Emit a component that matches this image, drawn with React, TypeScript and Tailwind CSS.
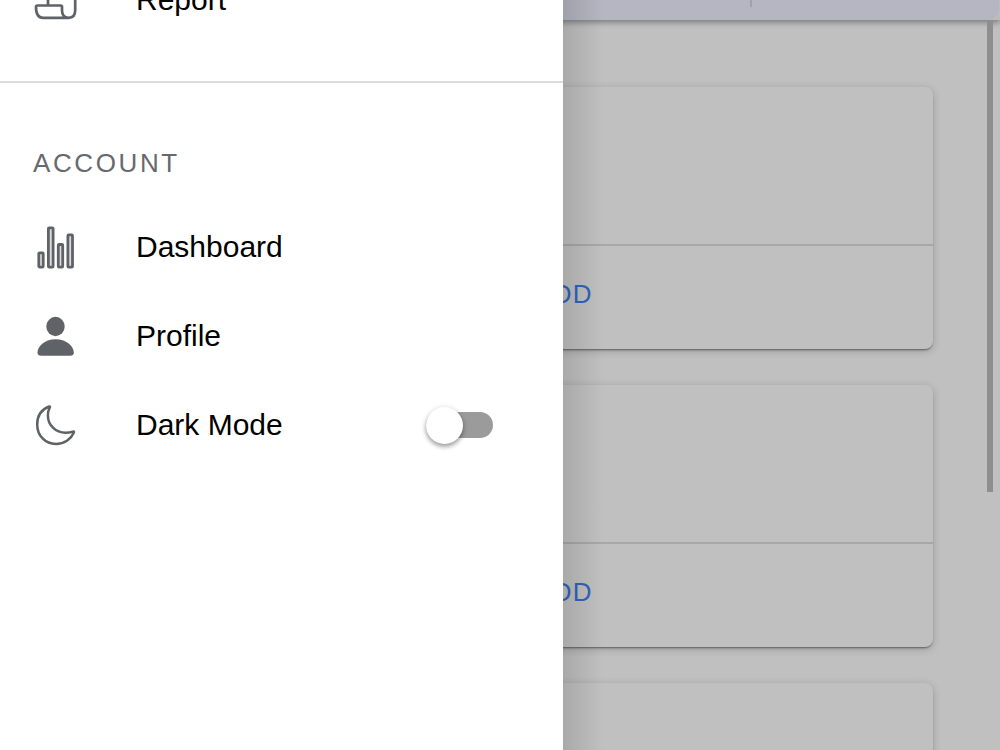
import { useState, type ReactNode } from "react";

function ReportIcon() {
  return (
    <svg viewBox="0 0 44 44" className="size-11" fill="none" stroke="currentColor" strokeWidth="2.7" strokeLinejoin="round" strokeLinecap="round" aria-hidden="true">
      <path d="M15 27.500V7a4.500 4.500 0 0 1 4.500-4.500h18.500a4.500 4.500 0 0 1 4.200 4.500V32q0 7.800-6.500 7.800T29 32.500v-3.500q0-1.500-1.500-1.500H4.500q-1.500 0-1.500 1.500 0 10.800 7 10.800h26" />
      <path d="M21 11h15M21 18h15" />
    </svg>
  );
}

function ChartIcon() {
  return (
    <svg viewBox="0 0 44 44" className="size-11" fill="#dcdce0" stroke="currentColor" strokeWidth="2.800" aria-hidden="true">
      <rect x="5.800" y="27.800" width="4.400" height="14.300" rx="0.800" />
      <rect x="15.400" y="2.800" width="4.700" height="39.300" rx="0.800" />
      <rect x="25.300" y="19.500" width="4.400" height="22.600" rx="0.800" />
      <rect x="34.900" y="9.900" width="4.600" height="32.200" rx="0.800" />
    </svg>
  );
}

function PersonIcon() {
  return (
    <svg viewBox="0 0 44 44" className="size-11" fill="currentColor" aria-hidden="true">
      <ellipse cx="22.500" cy="12.500" rx="9.200" ry="9.700" />
      <path d="M8.200 41.800Q4.500 41.800 4.500 38.500C4.500 32.500 11.200 25.200 22.600 25.200S40.800 32.500 40.800 38.500Q40.800 41.800 37.100 41.800Z" />
    </svg>
  );
}

function MoonIcon() {
  return (
    <svg viewBox="0 0 44 44" className="size-11" fill="none" stroke="currentColor" strokeWidth="2.500" strokeLinejoin="round" aria-hidden="true">
      <path d="M16.200 3.500C8.500 6.300 4.200 12.800 4.200 21.500C4.200 32.800 12.300 41 23 41C31.300 41 38 36.300 40.900 29.600C41.300 28.600 40.700 28.300 39.800 28.600C37.800 29.300 35.500 29.800 32.500 29.800C22.500 29.800 14.900 22 14.900 12.500C14.900 9.500 15.700 6.500 16.700 4.700C17.200 3.700 17 3.200 16.200 3.500Z" />
    </svg>
  );
}

function MenuRow({ icon, children }: { icon: ReactNode; children: ReactNode }) {
  return (
    <li className="flex h-[89px] shrink-0 items-center pl-[33px] pr-[70px]">
      <span className="mr-[59px] flex text-[#5f6368]">{icon}</span>
      {children}
    </li>
  );
}

function Card() {
  return (
    <article className="rounded-lg bg-[#c0c0c0] shadow-[0_2px_2px_-1px_rgba(0,0,0,0.45),0_2px_8px_rgba(0,0,0,0.2)]">
      <div className="h-[157px]" />
      <div className="flex justify-center border-t-2 border-[#a8a8a8] pt-[30px] pb-9">
        <button type="button" className="text-[26px] leading-[37px] tracking-wider text-[#3064bb]">
          ADD
        </button>
      </div>
    </article>
  );
}

export default function App() {
  const [dark, setDark] = useState(false);

  return (
    <div className="relative h-screen overflow-hidden bg-[#c0c0c0] font-['Liberation_Sans',Arial,sans-serif]">
      <header className="relative h-5 bg-[#bcbcbf] shadow-[0_2px_6px_rgba(0,0,0,0.4)]">
        <div className="mr-px flex h-5 justify-end rounded-br-xl bg-[#b5b6c1] pr-[247px]">
          <span className="h-[7px] w-0.5 bg-[#a0a1ab]" />
        </div>
      </header>

      <main className="flex flex-col gap-9 pt-[67px] pr-[67px] pl-[194px]">
        <Card />
        <Card />
        <Card />
      </main>

      <div className="absolute top-5 right-[7px] h-[472px] w-1.5 bg-[#8e8e8e]" />

      <nav
        aria-label="Main menu"
        className="absolute inset-y-0 left-0 w-[563px] bg-white text-[30px] leading-10 text-black after:absolute after:inset-y-0 after:left-full after:w-10 after:bg-linear-to-r after:from-black/12 after:to-transparent"
      >
        <ul className="flex h-11 flex-col justify-end overflow-hidden">
          <MenuRow icon={<ReportIcon />}>
            <a href="#report">Report</a>
          </MenuRow>
        </ul>
        <hr className="mt-[37px] border-t-2 border-[#dcdcdc]" />
        <h2 className="mt-[60px] pl-[33px] text-[26px] tracking-widest text-[#66696d]">ACCOUNT</h2>
        <ul className="mt-[19px]">
          <MenuRow icon={<ChartIcon />}>
            <a href="#dashboard">Dashboard</a>
          </MenuRow>
          <MenuRow icon={<PersonIcon />}>
            <a href="#profile">Profile</a>
          </MenuRow>
          <MenuRow icon={<MoonIcon />}>
            <label htmlFor="dark-mode" className="grow">
              Dark Mode
            </label>
            <input
              id="dark-mode"
              type="checkbox"
              role="switch"
              checked={dark}
              onChange={(e) => setDark(e.target.checked)}
              className="relative h-[26px] w-[67px] appearance-none rounded-full bg-[#9b9b9b] before:absolute before:-top-[5px] before:left-0 before:size-[37px] before:rounded-full before:bg-white before:shadow-[0_3px_4px_rgba(0,0,0,0.3),0_1px_6px_rgba(0,0,0,0.15)] checked:bg-[#8ab4f8] checked:before:left-[30px]"
            />
          </MenuRow>
        </ul>
      </nav>
    </div>
  );
}
